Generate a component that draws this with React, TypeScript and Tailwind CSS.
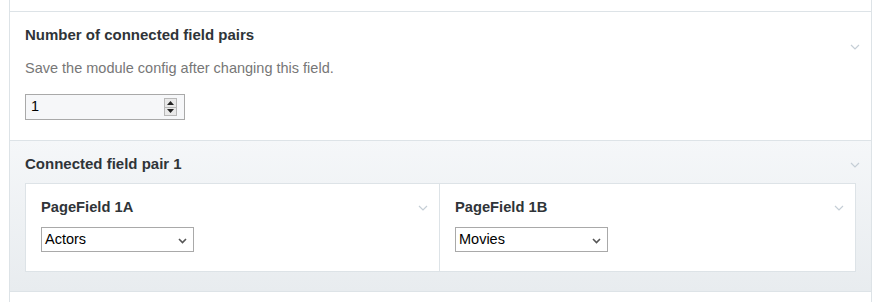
import React from "react";

function Chevron({ className = "" }: { className?: string }) {
  return (
    <svg width="10" height="6" viewBox="0 0 10 6" className={className}>
      <path d="M1 1 L5 5 L9 1" fill="none" stroke="#c5ced6" strokeWidth="1.2" />
    </svg>
  );
}

function SelectBox({ value }: { value: string }) {
  return (
    <div className="relative w-[153px] h-[25px] border border-[#a9a9a9] bg-white flex items-center pl-[3px] text-[14.5px] text-black">
      <span>{value}</span>
      <svg width="9" height="6" viewBox="0 0 9 6" className="absolute right-[6px] top-[10px]">
        <path d="M1 1 L4.5 4.5 L8 1" fill="none" stroke="#555" strokeWidth="1.6" />
      </svg>
    </div>
  );
}

export default function App() {
  return (
    <div className="w-[882px] h-[302px] bg-white font-['Liberation_Sans',Arial,sans-serif] overflow-hidden">
      <div className="ml-[9px] w-[863px] border-l border-r border-[#dde3e7]">
        <div className="h-[12px] border-b border-[#dde3e7]" />
        <div className="relative h-[129px] border-b border-[#dde3e7] bg-white pl-[15px] pt-[13px]">
          <Chevron className="absolute right-[11px] top-[32px]" />
          <div className="text-[15px] leading-[20px] font-bold text-[#2f3438]">Number of connected field pairs</div>
          <div className="mt-[13px] text-[14.5px] leading-[20px] text-[#777]">Save the module config after changing this field.</div>
          <div className="mt-[16px] relative w-[160px] h-[26px] border border-[#a9a9a9] bg-[#f6f7f9] flex items-center pl-[5px] text-[14.5px] text-black">
            <span>1</span>
            <div className="absolute right-[7px] top-[3px] w-[13px] h-[18px] border border-[#b8b8b8] bg-[#e9e9e9] flex flex-col">
              <div className="flex-1 flex items-center justify-center border-b border-[#b8b8b8]">
                <svg width="7" height="4" viewBox="0 0 7 4"><path d="M0 4 L3.5 0 L7 4 Z" fill="#222" /></svg>
              </div>
              <div className="flex-1 flex items-center justify-center">
                <svg width="7" height="4" viewBox="0 0 7 4"><path d="M0 0 L3.5 4 L7 0 Z" fill="#222" /></svg>
              </div>
            </div>
          </div>
        </div>
        <div className="relative h-[151px] border-b border-[#dde3e7] bg-gradient-to-b from-[#f5f7f9] to-[#e8ecef] pl-[15px] pr-[15px] pt-[13px]">
          <Chevron className="absolute right-[11px] top-[21px]" />
          <div className="text-[15px] leading-[20px] font-bold text-[#2f3438]">Connected field pair 1</div>
          <div className="mt-[9px] h-[89px] border border-[#dde3e7] bg-white flex">
            <div className="relative w-[414px] border-r border-[#dde3e7] pl-[15px] pt-[13px]">
              <Chevron className="absolute right-[11px] top-[21px]" />
              <div className="text-[14.7px] leading-[20px] font-bold text-[#2f3438]">PageField 1A</div>
              <div className="mt-[10px]"><SelectBox value="Actors" /></div>
            </div>
            <div className="relative flex-1 pl-[15px] pt-[13px]">
              <Chevron className="absolute right-[11px] top-[21px]" />
              <div className="text-[14.7px] leading-[20px] font-bold text-[#2f3438]">PageField 1B</div>
              <div className="mt-[10px]"><SelectBox value="Movies" /></div>
            </div>
          </div>
        </div>
        <div className="h-[20px]" />
      </div>
    </div>
  );
}
